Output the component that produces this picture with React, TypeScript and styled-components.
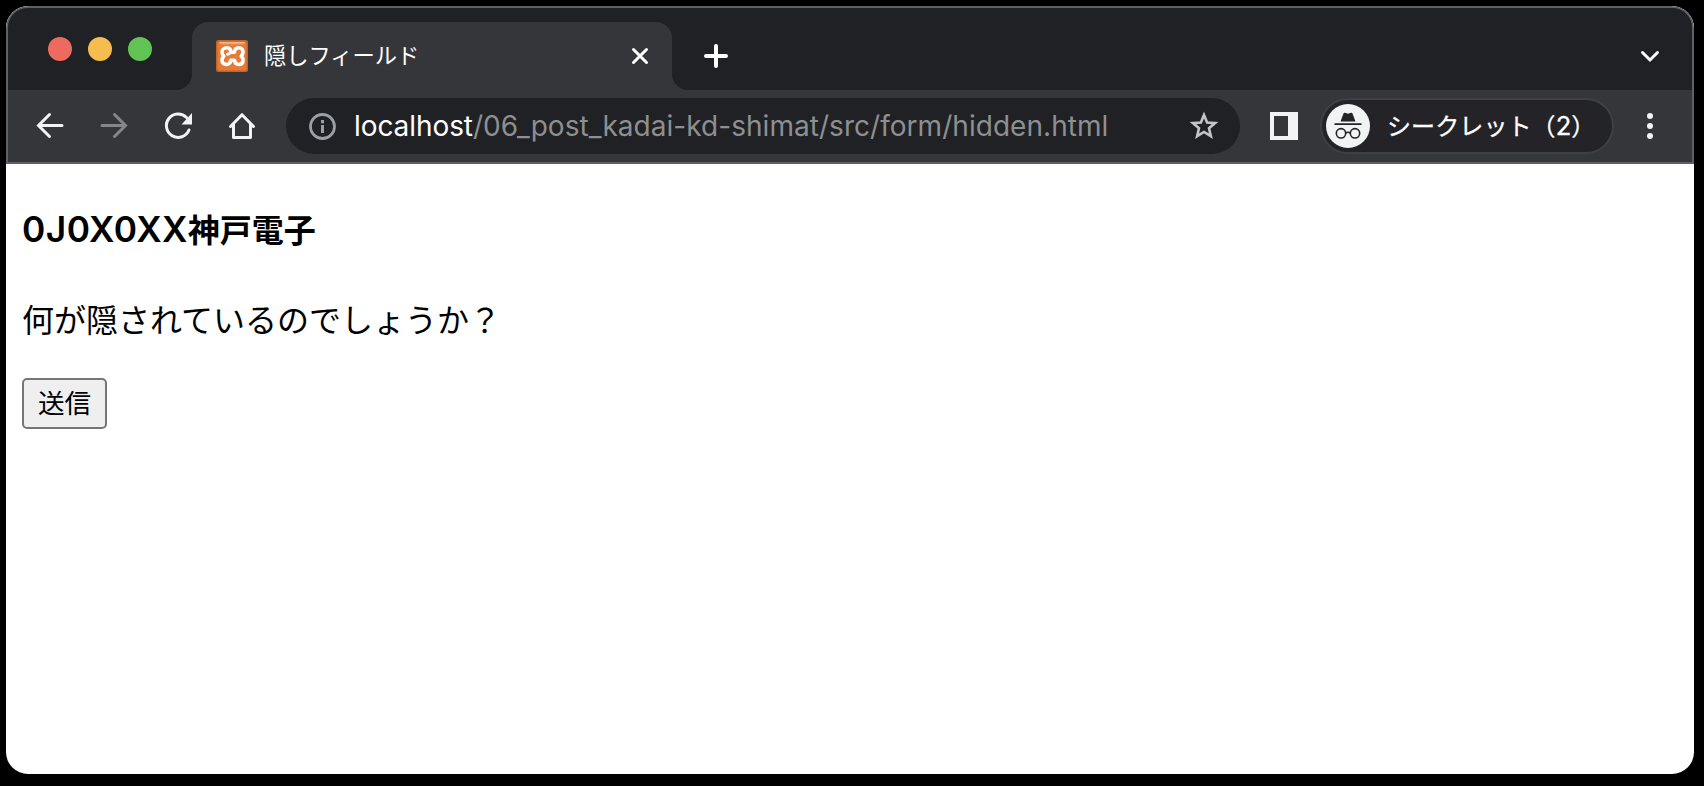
import React from "react";
import styled, { createGlobalStyle } from "styled-components";

const GlobalStyle = createGlobalStyle`
  *, *::before, *::after { box-sizing: border-box; }
  body {
    margin: 0;
    background: #000;
    font-family: Inter, "Noto Sans CJK JP", sans-serif;
  }
`;

const Desktop = styled.main`
  height: 786px;
  padding: 6px 10px 12px 6px;
  background: #000;
`;

const Window = styled.div`
  display: flex;
  flex-direction: column;
  height: 768px;
  border-radius: 22px;
  overflow: hidden;
  background: #fff;
`;

const Chrome = styled.header`
  flex: none;
  height: 158px;
  border: 2px solid #5f6063;
  border-radius: 22px 22px 0 0;
  overflow: hidden;
  background: #35363a;
`;

const TabStrip = styled.div`
  display: flex;
  height: 82px;
  padding: 14px 28px 0 40px;
  background: #202124;
`;

const TrafficLights = styled.div`
  display: flex;
  gap: 16px;
  width: 144px;
  padding-top: 15px;
`;

const Light = styled.span<{ $color: string }>`
  width: 24px;
  height: 24px;
  border-radius: 50%;
  background: ${(p) => p.$color};
`;

const Tab = styled.div`
  position: relative;
  display: flex;
  align-items: center;
  width: 480px;
  height: 68px;
  padding: 0 24px;
  border-radius: 16px 16px 0 0;
  background: #35363a;
  &::before,
  &::after {
    content: "";
    position: absolute;
    bottom: 0;
    width: 16px;
    height: 16px;
  }
  &::before {
    right: 100%;
    background: radial-gradient(circle at 0 0, #202124 15.5px, #35363a 16.5px);
  }
  &::after {
    left: 100%;
    background: radial-gradient(circle at 100% 0, #202124 15.5px, #35363a 16.5px);
  }
`;

const TabTitle = styled.span`
  flex: 1;
  margin-left: 16px;
  padding-bottom: 1px;
  color: #fff;
  font-size: 22.25px;
  line-height: 32px;
`;

const NewTab = styled.div`
  flex: 1;
  padding: 22px 0 0 32px;
`;

const TabSearch = styled.div`
  padding-top: 22px;
`;

const Icon = styled.svg`
  display: block;
  flex: none;
  overflow: visible;
`;

const Toolbar = styled.div`
  display: flex;
  align-items: center;
  height: 72px;
  padding: 0 26px;
`;

const NavButtons = styled.div`
  display: flex;
  flex: none;
  gap: 32px;
  width: 252px;
`;

const AddressBar = styled.div`
  display: flex;
  flex: none;
  align-items: center;
  width: 954px;
  height: 56px;
  padding: 0 20px;
  border-radius: 28px;
  background: #202124;
`;

const Url = styled.span`
  flex: 1;
  margin-left: 16px;
  color: #8e8f91;
  font-size: 28px;
  line-height: 34px;
  letter-spacing: 0.04px;
  white-space: nowrap;
`;

const Host = styled.span`
  color: #fff;
  letter-spacing: -0.08px;
`;

const Panel = styled.div`
  flex: none;
  margin-left: 28px;
`;

const Profile = styled.div`
  display: flex;
  flex: none;
  align-items: center;
  width: 294px;
  height: 56px;
  margin: 0 20px;
  padding-left: 4px;
  border: 2px solid #3f4045;
  border-radius: 28px;
  background: #242328;
`;

const ProfileName = styled.span`
  margin-left: 17px;
  padding-top: 1px;
  color: #fff;
  font-size: 24px;
  font-weight: 400;
  line-height: 34px;
  letter-spacing: 0.1px;
  white-space: nowrap;
  -webkit-text-stroke: 0.3px #fff;
`;

const Count = styled.span`
  font-size: 25.5px;
`;

const Page = styled.section`
  flex: 1;
  padding: 49px 16px;
  color: #000;
`;

const Heading = styled.h4`
  height: 36px;
  margin: 0;
  font-size: 32px;
  font-weight: 700;
  line-height: 36px;
`;

const StudentId = styled.span`
  font-size: 35.3px;
  font-weight: 600;
  line-height: 32px;
  letter-spacing: 0.45px;
`;

const Message = styled.p`
  margin: 53px 0 38px;
  font-size: 32px;
  line-height: 38px;
`;

const Submit = styled.button`
  display: block;
  width: 85px;
  height: 51px;
  padding: 0 0 3px;
  border: 2px solid #767676;
  border-radius: 5px;
  background: #efefef;
  color: #000;
  font: 26.600px/42px "Noto Sans CJK JP", sans-serif;
`;

const Favicon = () => (
  <Icon width="32" height="32" viewBox="0 0 32 32">
    <defs>
      <linearGradient id="gloss" x2="0" y2="1">
        <stop stopColor="#f5c09b" />
        <stop offset="1" stopColor="#e9803f" />
      </linearGradient>
    </defs>
    <rect width="32" height="32" rx="2.5" fill="#c66425" />
    <rect x="1.5" y="1.5" width="29" height="29" rx="2" fill="#e67b37" />
    <path d="M3 2h26q-1 3-4 3H7Q4 5 3 2Z" fill="url(#gloss)" />
    <g fill="none" stroke="#fff" strokeWidth="3.600" strokeLinecap="round" strokeLinejoin="round">
      <path d="M14.800 12.300C14.800 9.500 13.500 7.800 10.800 7.800S6 9.600 6 12c0 1.800.6 3 1.800 4.200C6.600 17.400 6 18.700 6 20.300c0 2.400 1.700 4.200 4.200 4.200 2.700 0 4.300-1.600 4.500-4.300h3.800c.2 2.700 1.700 4.300 4.300 4.300s4.200-1.700 4.200-4.200c0-1.600-.6-2.900-1.800-4.100 1.200-1.200 1.800-2.400 1.800-4.200 0-2.500-1.700-4.200-4.200-4.200s-4.200 1.700-4.300 4.500Z" />
      <path d="M14.500 12.600Q14 14 11.500 14.200" strokeWidth="3" />
    </g>
  </Icon>
);

const Arrow = ({ color, flip }: { color: string; flip?: boolean }) => (
  <Icon width="32" height="32" viewBox="0 0 32 32">
    <path
      transform={flip ? "matrix(-1 0 0 1 32 0)" : undefined}
      d="M15.500 4.500 4.500 15.500l11 11M5 15.500h23"
      fill="none"
      stroke={color}
      strokeWidth="3"
      strokeLinecap="round"
    />
  </Icon>
);

const Incognito = () => (
  <Icon width="44" height="44" viewBox="0 0 44 44">
    <circle cx="22" cy="22" r="22" fill="#f1f3f4" />
    <path d="m14.500 17.500 3-8q.5-1 1.500-.700l3 1 3-1q1-.300 1.500.700l3 8Z" fill="#242328" />
    <path d="M8.500 20.200h27" stroke="#242328" strokeWidth="1.800" />
    <g fill="none" stroke="#242328" strokeWidth="1.600">
      <circle cx="15" cy="29.300" r="4.700" />
      <circle cx="29" cy="29.300" r="4.700" />
      <path d="M19.700 29q2.300-1.500 4.600 0" />
    </g>
  </Icon>
);

export default function App() {
  return (
    <Desktop>
      <GlobalStyle />
      <Window>
        <Chrome>
          <TabStrip>
            <TrafficLights>
              <Light $color="#ed6a5e" />
              <Light $color="#f5bd4f" />
              <Light $color="#61c454" />
            </TrafficLights>
            <Tab>
              <Favicon />
              <TabTitle>隠しフィールド</TabTitle>
              <Icon width="16" height="16" viewBox="0 0 16 16">
                <path d="m1.500 1.500 13 13m0-13-13 13" stroke="#fff" strokeWidth="3" strokeLinecap="round" />
              </Icon>
            </Tab>
            <NewTab>
              <Icon width="24" height="24" viewBox="0 0 24 24">
                <path d="M12 2v20M2 12h20" stroke="#fff" strokeWidth="4" strokeLinecap="round" />
              </Icon>
            </NewTab>
            <TabSearch>
              <Icon width="28" height="24" viewBox="0 0 28 24">
                <path d="m6.500 8.500 7.500 7.500 7.500-7.500" fill="none" stroke="#fff" strokeWidth="3" strokeLinecap="round" />
              </Icon>
            </TabSearch>
          </TabStrip>
          <Toolbar>
            <NavButtons>
              <Arrow color="#f1f3f4" />
              <Arrow color="#85868a" flip />
              <Icon width="32" height="32" viewBox="0 0 32 32">
                <path d="M27 20A11.700 11.700 0 1 1 24.500 7.500" fill="none" stroke="#f1f3f4" strokeWidth="3" strokeLinecap="round" />
                <path d="M30 3v11.500H19.500Z" fill="#f1f3f4" />
              </Icon>
              <Icon width="32" height="32" viewBox="0 0 32 32">
                <path d="M4.500 16.500 16 4.700l11.500 11.800M7.500 14v13.500h17V14" fill="none" stroke="#f1f3f4" strokeWidth="3" strokeLinecap="round" strokeLinejoin="round" />
              </Icon>
            </NavButtons>
            <AddressBar>
              <Icon width="32" height="32" viewBox="0 0 32 32">
                <circle cx="16.500" cy="16.500" r="12" fill="none" stroke="#9aa0a6" strokeWidth="2.800" />
                <path d="M16.500 10v3.200M16.500 15v8" stroke="#9aa0a6" strokeWidth="3" />
              </Icon>
              <Url>
                <Host>localhost</Host>/06_post_kadai-kd-shimat/src/form/hidden.html
              </Url>
              <Icon width="32" height="32" viewBox="0 0 32 32">
                <path d="m16 5 3.100 7.500 8 .600-6.100 5.200 1.900 7.900L16 22l-6.900 4.200 1.900-7.900-6.100-5.200 8-.600Z" fill="none" stroke="#c3c4c6" strokeWidth="2.600" />
              </Icon>
            </AddressBar>
            <Panel>
              <Icon width="32" height="32" viewBox="0 0 32 32">
                <path fillRule="evenodd" d="M2 2h28v28H2ZM6 6v20h14V6Z" fill="#f1f3f4" />
              </Icon>
            </Panel>
            <Profile>
              <Incognito />
              <ProfileName>シークレット（<Count>2</Count>）</ProfileName>
            </Profile>
            <Icon width="32" height="32" viewBox="0 0 32 32">
              <g fill="#f1f3f4">
                <circle cx="16" cy="6" r="3" />
                <circle cx="16" cy="16" r="3" />
                <circle cx="16" cy="26" r="3" />
              </g>
            </Icon>
          </Toolbar>
        </Chrome>
        <Page>
          <Heading>
            <StudentId>0J0X0XX</StudentId>神戸電子
          </Heading>
          <Message>何が隠されているのでしょうか？</Message>
          <Submit type="button">送信</Submit>
        </Page>
      </Window>
    </Desktop>
  );
}
